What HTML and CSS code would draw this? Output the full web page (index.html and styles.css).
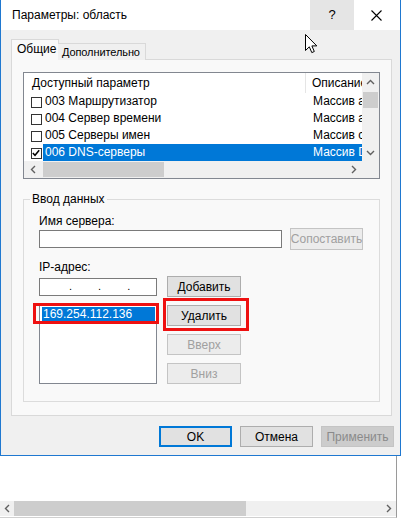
FILE: index.html
```html
<!DOCTYPE html>
<html>
<head>
<meta charset="utf-8">
<link rel="stylesheet" href="styles.css">
</head>
<body>
<div class="dialog">
  <div class="titlebar">
    <span class="title">Параметры: область</span>
    <div class="tb-help">?</div>
    <div class="tb-close">
      <svg width="11" height="11" viewBox="0 0 11 11"><path d="M0.5 0.5 L10.5 10.5 M10.5 0.5 L0.5 10.5" stroke="#000" stroke-width="1.1" fill="none"/></svg>
    </div>
  </div>
  <div class="client">
    <div class="tabs">
      <div class="tab active">Общие</div>
      <div class="tab extra">Дополнительно</div>
    </div>
    <div class="panel">
      <div class="listview">
        <div class="lv-main">
          <div class="lv-header">
            <div class="h1">Доступный параметр</div>
            <div class="h2">Описание</div>
          </div>
          <div class="lv-row">
            <span class="chk"></span>
            <div class="cells"><span class="c1">003 Маршрутизатор</span><span class="c2">Массив а</span></div>
          </div>
          <div class="lv-row">
            <span class="chk"></span>
            <div class="cells"><span class="c1">004 Сервер времени</span><span class="c2">Массив а</span></div>
          </div>
          <div class="lv-row">
            <span class="chk"></span>
            <div class="cells"><span class="c1">005 Серверы имен</span><span class="c2">Массив с</span></div>
          </div>
          <div class="lv-row">
            <span class="chk checked"><svg width="8" height="8" viewBox="0 0 8 8"><path d="M0.8 4 L3 6.3 L7.2 1.2" stroke="#000" stroke-width="1.5" fill="none"/></svg></span>
            <div class="cells selected"><span class="c1">006 DNS-серверы</span><span class="c2">Массив DNS</span></div>
          </div>
        </div>
        <div class="vscroll">
          <div class="sb-arrow"><svg width="9" height="6" viewBox="0 0 9 6"><path d="M1 5 L4.5 1.5 L8 5" stroke="#606060" stroke-width="1.4" fill="none"/></svg></div>
          <div class="vthumb"></div>
          <div class="sb-fill"></div>
          <div class="sb-arrow"><svg width="9" height="6" viewBox="0 0 9 6"><path d="M1 1 L4.5 4.5 L8 1" stroke="#606060" stroke-width="1.4" fill="none"/></svg></div>
        </div>
        <div class="hscroll">
          <div class="sb-arrow"><svg width="6" height="9" viewBox="0 0 6 9"><path d="M5 1 L1.5 4.5 L5 8" stroke="#606060" stroke-width="1.4" fill="none"/></svg></div>
          <div class="hthumb"></div>
          <div class="sb-fill"></div>
          <div class="sb-arrow"><svg width="6" height="9" viewBox="0 0 6 9"><path d="M1 1 L4.5 4.5 L1 8" stroke="#606060" stroke-width="1.4" fill="none"/></svg></div>
        </div>
        <div class="corner"></div>
      </div>

      <fieldset class="group">
        <legend>Ввод данных</legend>
        <div class="lbl">Имя сервера:</div>
        <div class="name-row">
          <div class="edit name-edit"></div>
          <div class="btn disabled">Сопоставить</div>
        </div>
        <div class="lbl ip-lbl">IP-адрес:</div>
        <div class="ip-grid">
          <div class="edit ip-edit"><span>.</span><span>.</span><span>.</span></div>
          <div class="btn">Добавить</div>
          <div class="listbox">
            <div class="lb-item">169.254.112.136</div>
          </div>
          <div class="btn">Удалить</div>
          <div class="btn disabled">Вверх</div>
          <div class="btn disabled">Вниз</div>
          <span class="mark mark-list"></span>
          <span class="mark mark-btn"></span>
        </div>
      </fieldset>
    </div>
    <div class="buttons">
      <div class="btn default">OK</div>
      <div class="btn">Отмена</div>
      <div class="btn inactive">Применить</div>
    </div>
  </div>
</div>
<div class="behind">
  <div class="behind-area"></div>
  <div class="bscroll">
    <div class="sb-arrow"><svg width="6" height="9" viewBox="0 0 6 9"><path d="M5 1 L1.5 4.5 L5 8" stroke="#606060" stroke-width="1.4" fill="none"/></svg></div>
    <div class="bthumb"></div>
    <div class="sb-fill"></div>
    <div class="sb-arrow"><svg width="6" height="9" viewBox="0 0 6 9"><path d="M1 1 L4.5 4.5 L1 8" stroke="#606060" stroke-width="1.4" fill="none"/></svg></div>
  </div>
</div>
<svg class="cursor" width="13" height="20" viewBox="0 0 13 20"><path d="M0.5 0.5 L0.5 16.5 L4.3 12.8 L6.8 18.6 L9.3 17.5 L6.9 11.9 L11.8 11.9 Z" fill="#fff" stroke="#000" stroke-width="1" stroke-linejoin="round"/></svg>
</body>
</html>
```

FILE: styles.css
```css
* { box-sizing: border-box; }
html, body { margin: 0; padding: 0; }
body {
  width: 402px;
  height: 519px;
  background: #ffffff;
  font-family: "Liberation Sans", Arial, sans-serif;
  font-size: 12px;
  color: #000;
  position: relative;
  overflow: hidden;
}

.dialog {
  width: 401px;
  border: 1px solid #1f78d0;
  border-top: none;
  background: #f0f0f0;
}

.titlebar {
  height: 30px;
  background: #fff;
  display: flex;
  align-items: stretch;
}
.title {
  flex: 1;
  padding-left: 11px;
  line-height: 31px;
  font-size: 12px;
}
.tb-help {
  width: 44px;
  background: #e5e5e5;
  display: flex;
  align-items: center;
  justify-content: center;
  font-size: 13px;
  padding-bottom: 1px;
}
.tb-close {
  width: 46px;
  display: flex;
  align-items: center;
  justify-content: center;
  padding-right: 1px;
}

.client {
  padding: 9px 6px 8px 10px;
}

.tabs {
  display: flex;
  align-items: flex-end;
  height: 21px;
  position: relative;
  z-index: 1;
  margin-bottom: -1px;
}
.tab {
  height: 17px;
  padding: 0 4px 0 4px;
  border: 1px solid #d9d9d9;
  border-bottom: none;
  background: #f0f0f0;
  line-height: 16px;
  white-space: nowrap;
}
.tab.active {
  height: 21px;
  width: 48px;
  padding: 0 5px;
  background: #f9f9f9;
  line-height: 19px;
  margin-right: -1px;
}
.tab + .tab { border-left: none; }
.tab.extra {
  width: 88px;
  font-size: 11px;
  letter-spacing: -0.1px;
  padding: 0 0 0 4px;
  overflow: hidden;
}

.panel {
  width: 381px;
  height: 357px;
  border: 1px solid #d9d9d9;
  background: #f9f9f9;
  padding: 12px 11px 0 11px;
}

/* list view */
.listview {
  width: 357px;
  height: 107px;
  border: 1px solid #828790;
  background: #fff;
  display: grid;
  grid-template-columns: 338px 17px;
  grid-template-rows: 88px 17px;
}
.lv-main { overflow: hidden; }
.lv-header {
  display: flex;
  height: 20px;
  line-height: 20px;
}
.h1 {
  width: 282px;
  padding-left: 8px;
  border-right: 1px solid #e5e5e5;
}
.h2 {
  flex: 1;
  padding-left: 6px;
  white-space: nowrap;
  overflow: hidden;
}
.lv-row {
  display: flex;
  height: 17px;
  align-items: stretch;
}
.chk {
  width: 19px;
  position: relative;
}
.chk::before {
  content: "";
  position: absolute;
  left: 7px;
  top: 4px;
  width: 9px;
  height: 9px;
  border: 1px solid #333;
  background: #fff;
}
.chk svg {
  position: absolute;
  left: 7.5px;
  top: 4.5px;
  z-index: 1;
}
.cells {
  flex: 1;
  display: flex;
  line-height: 17px;
  white-space: nowrap;
  overflow: hidden;
}
.cells.selected {
  background: #0078d7;
  color: #fff;
}
.c1 { width: 263px; padding-left: 2px; }
.c2 { flex: 1; padding-left: 7px; overflow: hidden; }

.vscroll, .hscroll, .corner, .bscroll { background: #f0f0f0; }
.vscroll {
  display: flex;
  flex-direction: column;
}
.vscroll .sb-arrow { height: 17px; }
.sb-arrow {
  display: flex;
  align-items: center;
  justify-content: center;
  flex: none;
}
.vthumb {
  height: 16px;
  margin: 2px 1px 0;
  background: #cdcdcd;
}
.sb-fill { flex: 1; }
.hscroll {
  display: flex;
}
.hscroll .sb-arrow { width: 17px; }
.hthumb {
  width: 121px;
  margin: 1px 0 1px 2px;
  background: #cdcdcd;
}

/* group box */
.group {
  margin: 13px 0 0 0;
  width: 357px;
  border: 1px solid #dcdcdc;
  padding: 8px 15px 17px 15px;
}
.group legend {
  padding: 0 2px;
  margin-left: -9px;
  line-height: 14px;
}
.lbl { line-height: 14px; height: 14px; }
.name-row {
  display: flex;
  align-items: center;
  gap: 8px;
  height: 22px;
}
.edit {
  height: 18px;
  border: 1px solid #7a7a7a;
  background: #fff;
}
.name-edit { width: 243px; }
.ip-lbl { margin-top: 10px; }

.ip-grid {
  position: relative;
  margin-top: 2px;
  display: grid;
  grid-template-columns: 118px 74px;
  grid-template-rows: 21px 21px 21px 21px;
  column-gap: 10px;
  row-gap: 8px;
}
.ip-edit {
  align-self: center;
  display: flex;
  gap: 26px;
  padding-left: 29px;
  line-height: 14px;
  font-size: 11px;
}
.listbox {
  grid-column: 1;
  grid-row: 2 / span 3;
  border: 1px solid #828790;
  background: #fff;
  padding: 1px 1px 0 2px;
}
.lb-item {
  background: #0078d7;
  color: #fff;
  height: 15px;
  line-height: 15px;
  padding-left: 1px;
}

.btn {
  width: 74px;
  height: 21px;
  border: 1px solid #adadad;
  background: #e1e1e1;
  display: flex;
  align-items: center;
  justify-content: center;
  white-space: nowrap;
}
.btn.disabled {
  background: #ececec;
  border-color: #c4c4c4;
  color: #a0a0a0;
}
.name-row .btn { width: 73px; height: 22px; }
.btn.default {
  border: 2px solid #0078d7;
}
.btn.inactive {
  background: #cccccc;
  border-color: #c4c4c4;
  color: #8a8a8a;
}

.mark {
  position: absolute;
  border: 3px solid #ee1010;
}
.mark-list { left: -6px; top: 27px; width: 126px; height: 21px; }
.mark-btn { left: 124px; top: 22px; width: 86px; height: 33px; }

.buttons {
  display: flex;
  justify-content: flex-end;
  gap: 8px;
  margin-top: 10px;
  height: 21px;
}
.buttons .btn { width: 73px; }

/* window behind */
.behind {
  width: 397px;
  height: 62px;
  border-right: 1px solid #9a9a9a;
  border-bottom: 1px solid #d0d0d0;
  display: flex;
  flex-direction: column;
}
.behind-area { flex: 1; }
.bscroll {
  height: 15px;
  margin-bottom: 1px;
  display: flex;
}
.bscroll .sb-arrow { width: 14px; }
.bthumb {
  width: 232px;
  background: #cdcdcd;
}

.cursor {
  position: absolute;
  left: 305px;
  top: 34px;
}
```
